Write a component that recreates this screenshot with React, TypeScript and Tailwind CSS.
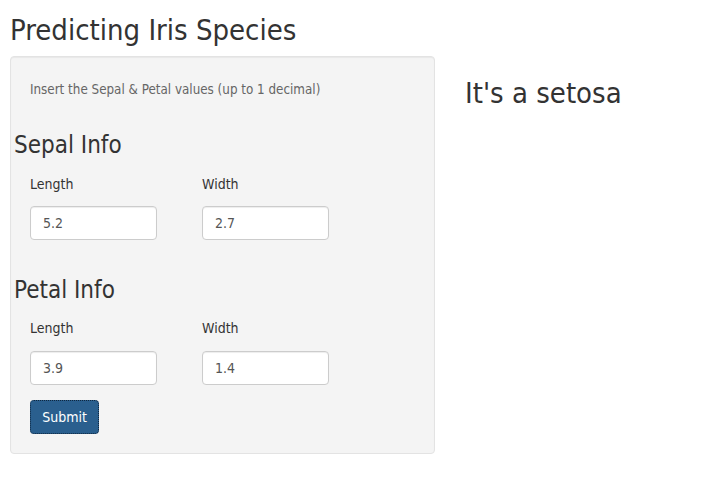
export default function App() {
  const input =
    "block w-[127px] h-[34px] bg-white border border-[#cccccc] rounded-[4px] px-[12px] text-[14px] text-[#555] shadow-[inset_0_1px_1px_rgba(0,0,0,0.075)] outline-none";
  return (
    <div className="min-h-[494px] bg-white text-[#333] font-['DejaVu_Sans_Condensed','DejaVu_Sans',sans-serif] px-[10px]">
      <h1 className="text-[29px] leading-[33px] pt-[14px] pb-[9px] font-normal">Predicting Iris Species</h1>
      <div className="flex">
        <div className="w-[425px] shrink-0 bg-[#f4f4f4] border border-[#e3e3e3] rounded-[4px] px-[19px] pt-[24px] pb-[19px] shadow-[inset_0_1px_1px_rgba(0,0,0,0.05)]">
          <p className="text-[13.3px] leading-[18px] text-[#666]">Insert the Sepal &amp; Petal values (up to 1 decimal)</p>
          <h3 className="text-[24px] leading-[28px] mt-[32px] -ml-[16px]">Sepal Info</h3>
          <div className="flex gap-[45px] mt-[15px]">
            <div>
              <div className="text-[14px] leading-[20px]">Length</div>
              <input className={input + " mt-[12px]"} defaultValue="5.2" />
            </div>
            <div>
              <div className="text-[14px] leading-[20px]">Width</div>
              <input className={input + " mt-[12px]"} defaultValue="2.7" />
            </div>
          </div>
          <h3 className="text-[24px] leading-[28px] mt-[36px] -ml-[16px]">Petal Info</h3>
          <div className="flex gap-[45px] mt-[14px]">
            <div>
              <div className="text-[14px] leading-[20px]">Length</div>
              <input className={input + " mt-[13px]"} defaultValue="3.9" />
            </div>
            <div>
              <div className="text-[14px] leading-[20px]">Width</div>
              <input className={input + " mt-[13px]"} defaultValue="1.4" />
            </div>
          </div>
          <button className="block mt-[15px] h-[34px] w-[69px] rounded-[4px] bg-[#2a5f8e] border border-dotted border-[#0e2740] text-white text-[14px]">
            Submit
          </button>
        </div>
        <div className="pl-[30px] pt-[21px]">
          <h3 className="text-[29px] leading-[32px]">It's a setosa</h3>
        </div>
      </div>
    </div>
  );
}
